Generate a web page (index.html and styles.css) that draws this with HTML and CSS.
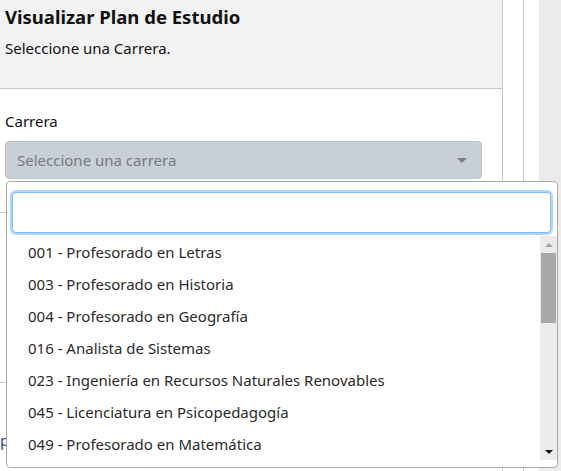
FILE: index.html
```html
<!DOCTYPE html>
<html lang="es">
<head>
<meta charset="utf-8">
<title>Visualizar Plan de Estudio</title>
<link rel="stylesheet" href="styles.css">
</head>
<body>
<div class="page">
  <div class="card">
    <div class="card-header">
      <h1 class="title">Visualizar Plan de Estudio</h1>
      <p class="subtitle">Seleccione una Carrera.</p>
    </div>
    <div class="card-body">
      <label class="label">Carrera</label>
      <div class="select">
        <span class="select-placeholder">Seleccione una carrera</span>
        <span class="select-arrow"></span>
      </div>
    </div>
    <div class="section section-a"></div>
    <div class="section section-b"><span class="link">pa</span></div>
  </div>
  <div class="gutter"></div>
  <div class="spacer"></div>
  <div class="page-scroll"></div>

  <div class="dropdown">
    <div class="search-wrap">
      <input class="search" type="text">
    </div>
    <div class="results">
      <ul class="options">
        <li class="option">001 - Profesorado en Letras</li>
        <li class="option">003 - Profesorado en Historia</li>
        <li class="option">004 - Profesorado en Geografía</li>
        <li class="option">016 - Analista de Sistemas</li>
        <li class="option">023 - Ingeniería en Recursos Naturales Renovables</li>
        <li class="option">045 - Licenciatura en Psicopedagogía</li>
        <li class="option">049 - Profesorado en Matemática</li>
      </ul>
      <div class="scrollbar">
        <span class="sb-up"></span>
        <div class="sb-track"><div class="sb-thumb"></div></div>
        <span class="sb-down"></span>
      </div>
    </div>
  </div>
</div>
</body>
</html>
```
FILE: styles.css
```css
* { box-sizing: border-box; }
html, body {
  margin: 0;
  padding: 0;
  background: #fff;
}
body {
  font-family: "Noto Sans", "Open Sans", sans-serif;
  color: #212529;
  width: 561px;
  height: 471px;
  overflow: hidden;
}
.page {
  position: relative;
  display: flex;
  height: 471px;
}
.card {
  width: 503px;
  border-right: 1px solid #c8c8c8;
  display: flex;
  flex-direction: column;
}
.card-header {
  background: #f2f2f2;
  border-bottom: 1px solid #c8c8c8;
  height: 89px;
  padding: 3px 5px 0;
}
.title {
  margin: 0;
  font-size: 18.5px;
  font-weight: 700;
  line-height: 28px;
  color: #111;
}
.subtitle {
  margin: 5px 0 0;
  font-size: 15px;
  line-height: 24px;
  color: #111;
}
.card-body {
  padding: 20px 20px 0 5px;
  display: flex;
  flex-direction: column;
}
.label {
  font-size: 15px;
  line-height: 24px;
  color: #111;
}
.select {
  margin-top: 8px;
  height: 38px;
  background: #c8cfd6;
  border: 1px solid #bcc3ca;
  border-radius: 4px;
  display: flex;
  align-items: center;
  justify-content: space-between;
  padding: 0 14px 0 11px;
}
.select-placeholder {
  font-size: 15px;
  color: #767b80;
}
.select-arrow {
  width: 0;
  height: 0;
  border-left: 5px solid transparent;
  border-right: 5px solid transparent;
  border-top: 5px solid #7a7f84;
}
.section-a {
  height: 34px;
  border-bottom: 1px solid #c8c8c8;
}
.section-b {
  height: 170px;
  border-bottom: 1px solid #c8c8c8;
}
.link {
  display: block;
  margin-top: 217px;
  font-size: 15px;
  color: #1b4f9a;
}
.gutter {
  width: 21px;
  border-right: 1px solid #c8c8c8;
}
.spacer {
  width: 15px;
}
.page-scroll {
  flex: 1;
  background: #ebebeb;
}
.dropdown {
  position: absolute;
  left: 6px;
  top: 181px;
  width: 552px;
  height: 287px;
  background: #fff;
  border: 1px solid #aaa;
  border-radius: 4px;
  display: flex;
  flex-direction: column;
}
.search-wrap {
  padding: 10px 6px 3px 5px;
}
.search {
  display: block;
  width: 100%;
  height: 41px;
  border: 1px solid #80bdff;
  border-radius: 4px;
  box-shadow: 0 0 0 2px rgba(0, 123, 255, 0.3);
  outline: none;
  background: #fff;
  font-family: inherit;
  font-size: 15px;
}
.results {
  display: flex;
  height: 224px;
}
.options {
  flex: 1;
  margin: 0;
  padding: 0;
  list-style: none;
}
.option {
  height: 32px;
  line-height: 32px;
  padding-left: 21px;
  font-size: 15px;
  color: #2b2b2b;
  white-space: nowrap;
}
.scrollbar {
  width: 17px;
  background: #ebebeb;
  display: flex;
  flex-direction: column;
  align-items: center;
}
.sb-up, .sb-down {
  height: 17px;
  width: 17px;
  display: flex;
  align-items: center;
  justify-content: center;
}
.sb-up::before {
  content: "";
  border-left: 4px solid transparent;
  border-right: 4px solid transparent;
  border-bottom: 4px solid #a3a3a3;
}
.sb-down::before {
  content: "";
  border-left: 4px solid transparent;
  border-right: 4px solid transparent;
  border-top: 4px solid #111;
}
.sb-track {
  flex: 1;
  width: 100%;
}
.sb-thumb {
  width: 15px;
  margin-left: 1px;
  height: 70px;
  background: #a8a8a8;
}
```
